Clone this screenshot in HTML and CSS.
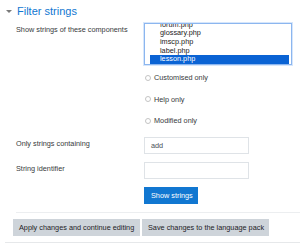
FILE: index.html
```html
<!DOCTYPE html>
<html>
<head>
<meta charset="utf-8">
<link rel="stylesheet" href="styles.css">
</head>
<body>
<div class="page">
  <div class="legend">
    <span class="caret"></span>
    <span class="title">Filter strings</span>
  </div>
  <div class="fields">
    <div class="row">
      <div class="label">Show strings of these components</div>
      <div class="control">
        <div class="select">
          <div class="opt">forum.php</div>
          <div class="opt">glossary.php</div>
          <div class="opt">imscp.php</div>
          <div class="opt">label.php</div>
          <div class="opt selected">lesson.php</div>
        </div>
      </div>
    </div>
    <div class="checks">
      <div class="check"><span class="box"></span>Customised only</div>
      <div class="check"><span class="box"></span>Help only</div>
      <div class="check"><span class="box"></span>Modified only</div>
    </div>
    <div class="row input-row first">
      <div class="label">Only strings containing</div>
      <div class="control"><div class="input">add</div></div>
    </div>
    <div class="row input-row">
      <div class="label">String identifier</div>
      <div class="control"><div class="input"></div></div>
    </div>
    <div class="row button-row">
      <div></div>
      <div class="control"><span class="btn primary">Show strings</span></div>
    </div>
    <div class="rule"></div>
  </div>
  <div class="actions">
    <span class="btn secondary">Apply changes and continue editing</span>
    <span class="btn secondary">Save changes to the language pack</span>
  </div>
  <div class="bottom-rule"></div>
</div>
</body>
</html>
```

FILE: styles.css
```css
* { box-sizing: border-box; }
html, body { margin: 0; padding: 0; background: #fff; }
body {
  font-family: "Liberation Sans", Arial, sans-serif;
  font-size: 7.3px;
  color: #373a3c;
  width: 300px;
  height: 245px;
  overflow: hidden;
}
.page { padding-top: 4px; }
.legend {
  display: flex;
  align-items: center;
  height: 14px;
  padding-left: 6px;
}
.caret {
  width: 0; height: 0;
  border-left: 3px solid transparent;
  border-right: 3px solid transparent;
  border-top: 3px solid #7a7a7a;
  margin-top: 1px;
}
.title {
  margin-left: 5px;
  font-size: 11px;
  line-height: 14px;
  color: #1177d1;
}
.fields { padding-left: 16px; margin-top: 5px; }
.row {
  display: grid;
  grid-template-columns: 128px 1fr;
}
.label {
  line-height: 9px;
  padding-top: 2px;
}
.select {
  width: 148px;
  height: 42px;
  border: 1px solid #8cb6ef;
  box-shadow: 0 0 0 1px #d6e6fb;
  display: flex;
  flex-direction: column;
  justify-content: flex-end;
  overflow: hidden;
  padding: 0 2px 0 5px;
  color: #222;
}
.opt {
  flex: none;
  height: 8.7px;
  line-height: 8.7px;
  padding-left: 10px;
}
.opt.selected { background: #0a63d4; color: #fff; }
.checks { padding-left: 128px; margin-top: 2px; }
.check {
  height: 21.5px;
  display: flex;
  align-items: center;
}
.box {
  width: 6px; height: 6px;
  border: 1px solid #c4c4c4;
  border-radius: 50%;
  margin-left: 1px;
  margin-right: 3px;
  background: #fff;
}
.input-row { margin-top: 8px; }
.input-row.first { margin-top: 5.5px; }
.input-row .label { padding-top: 1.5px; }
.input {
  width: 105px;
  height: 17px;
  border: 1px solid #dfe3e7;
  line-height: 15px;
  padding-left: 6px;
  color: #495057;
}
.button-row { margin-top: 8px; }
.btn {
  display: inline-block;
  height: 17px;
  line-height: 17px;
  padding: 0 6px;
  white-space: nowrap;
}
.primary {
  background: #1177d1;
  color: #fff;
  width: 54px;
  padding: 0 0 0 7px;
}
.rule {
  height: 1px;
  background: #eceef0;
  margin-top: 8px;
}
.actions {
  display: flex;
  gap: 2px;
  padding-left: 13px;
  margin-top: 6px;
}
.secondary {
  background: #ced4da;
  color: #1d2125;
  width: 127px;
}
.bottom-rule {
  height: 1px;
  background: #e6e8ea;
  margin: 6px 0 0 5px;
}
```
